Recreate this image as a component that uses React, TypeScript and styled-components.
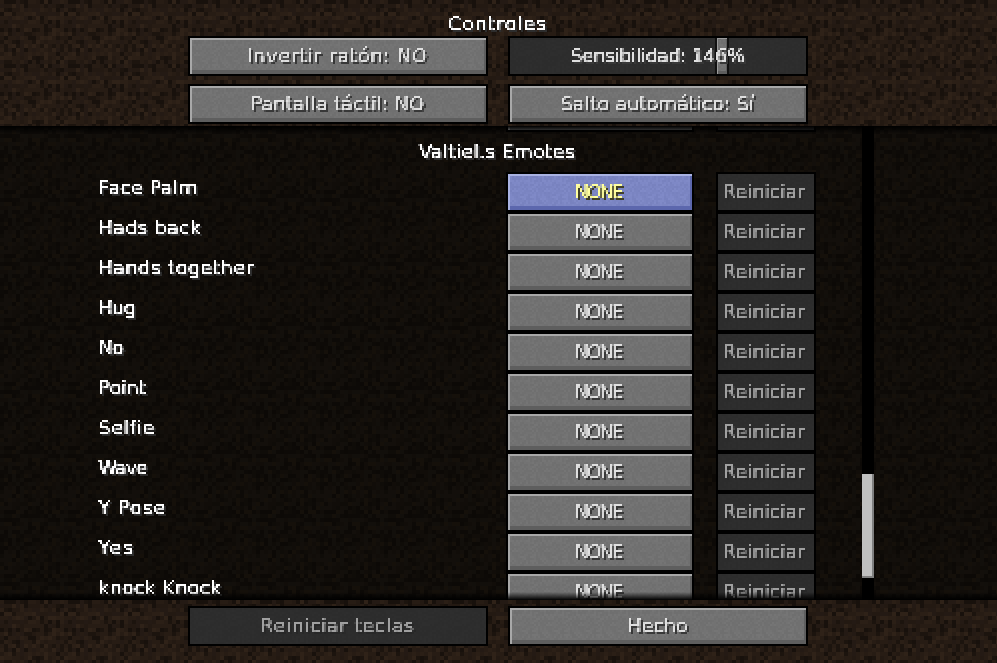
import React from "react";
import styled, { createGlobalStyle } from "styled-components";

function tile(size: number, cell: number, palette: string[], seed: number): string {
  let s = seed;
  const next = () => {
    s = (s * 16807) % 2147483647;
    return s / 2147483647;
  };
  let rects = "";
  for (let y = 0; y < size; y += cell) {
    for (let x = 0; x < size; x += cell) {
      const c = palette[Math.floor(next() * palette.length)];
      rects += `<rect x="${x}" y="${y}" width="${cell}" height="${cell}" fill="${c}"/>`;
    }
  }
  const svg = `<svg xmlns="http://www.w3.org/2000/svg" width="${size}" height="${size}" shape-rendering="crispEdges">${rects}</svg>`;
  return `url("data:image/svg+xml,${encodeURIComponent(svg)}")`;
}

const dirtBright = tile(64, 4, ["#271c14", "#271c14", "#231912", "#2b1f16", "#1c140e", "#18110c", "#241a14", "#2f2218"], 4711);
const dirtDark = tile(64, 4, ["#110d09", "#0f0c08", "#0d0a07", "#130f0b", "#0c0906", "#120f0b", "#15100a"], 4711);
const stone = tile(32, 2, ["#727272", "#737373", "#707070", "#757575", "#6f6f6f"], 91);
const blueStone = tile(32, 2, ["#7c86c3", "#7e88c6", "#7a84c1", "#808ac7", "#7882bf"], 91);
const darkStone = tile(32, 2, ["#2d2d2d", "#2c2c2c", "#2e2e2e", "#2c2c2c"], 17);

const Global = createGlobalStyle`
  html, body { margin: 0; padding: 0; background: #000; overflow: hidden; }
  #root { width: 997px; height: 663px; }
`;

const Screen = styled.div`
  width: 997px;
  height: 663px;
  display: flex;
  flex-direction: column;
  font-family: "DejaVu Sans", sans-serif;
  font-size: 19px;
  line-height: 22px;
`;

const Header = styled.header`
  height: 126px;
  flex: none;
  box-sizing: border-box;
  padding: 13px 1px 0 0;
  display: flex;
  flex-direction: column;
  align-items: center;
  background-image: ${dirtBright};
`;

const Title = styled.div`
  height: 23px;
  color: #fff;
  letter-spacing: 1px;
  text-shadow: 2px 2px 0 #2e2e2e;
  padding: 0 4px;
  filter: url(#pixel);
`;

const ButtonGrid = styled.div`
  display: grid;
  grid-template-columns: 300px 300px;
  column-gap: 20px;
  row-gap: 8px;
`;

type Tone = "normal" | "hover" | "disabled";

const Btn = styled.div<{ $tone?: Tone; $w?: number; $shift?: number }>`
  position: relative;
  box-sizing: border-box;
  height: 40px;
  width: ${(p) => (p.$w ? `${p.$w}px` : "auto")};
  flex: none;
  border: 2px solid #000;
  padding-right: ${(p) => p.$shift ?? 0}px;
  display: flex;
  align-items: center;
  justify-content: center;
  background-image: ${(p) =>
    p.$tone === "hover" ? blueStone : p.$tone === "disabled" ? darkStone : stone};
  box-shadow: ${(p) =>
    p.$tone === "hover"
      ? "inset 2px 2px 0 #a9b2e2, inset -2px -4px 0 #5c67ad"
      : p.$tone === "disabled"
        ? "none"
        : "inset 2px 2px 0 #a8a8a8, inset -2px -4px 0 #5e5e5e"};
`;

const BtnText = styled.span<{ $tone?: Tone; $ls?: number }>`
  position: relative;
  padding: 0 4px;
  filter: url(#pixel);
  white-space: nowrap;
  letter-spacing: ${(p) => p.$ls ?? 0}px;
  color: ${(p) =>
    p.$tone === "hover" ? "#ffffa0" : p.$tone === "disabled" ? "#a0a0a0" : "#e0e0e0"};
  text-shadow: 2px 2px 0
    ${(p) => (p.$tone === "hover" ? "#3f3f28" : p.$tone === "disabled" ? "#282828" : "#383838")};
`;

const Slider = styled(Btn)`
  background-image: ${darkStone};
  box-shadow: none;
`;

const SliderHandle = styled.div`
  position: absolute;
  left: 205px;
  top: 0;
  bottom: 0;
  width: 10px;
  border-left: 2px solid #111;
  border-right: 2px solid #111;
  background-image: ${stone};
  box-shadow: inset 1px 1px 0 #9a9a9a, inset -1px -3px 0 #5e5e5e;
`;

const List = styled.main`
  position: relative;
  flex: 1;
  min-height: 0;
  overflow: hidden;
  background-image: ${dirtDark};
`;

const ListContent = styled.div`
  margin-top: -34px;
`;

const SectionTitle = styled.div`
  height: 40px;
  display: flex;
  align-items: center;
  justify-content: center;
  color: #fff;
  padding: 0 2px 0 0;
  box-sizing: border-box;
  letter-spacing: 0.3px;
  text-shadow: 2px 2px 0 #2e2e2e;
  span {
    padding: 0 4px;
    filter: url(#pixel);
  }
`;

const Row = styled.div`
  height: 40px;
  display: flex;
  padding-left: 95px;
`;

const RowLabel = styled.div<{ $ls?: number }>`
  width: 411px;
  flex: none;
  padding-top: 5px;
  box-sizing: border-box;
  color: #fff;
  letter-spacing: ${(p) => p.$ls ?? 0}px;
  text-shadow: 2px 2px 0 #2e2e2e;
  white-space: nowrap;
  span {
    display: inline-block;
    padding: 0 4px;
    filter: url(#pixel);
  }
`;

const RowGap = styled.div`
  width: 22px;
  flex: none;
`;

const Scrollbar = styled.div`
  position: absolute;
  left: 862px;
  top: 0;
  bottom: 0;
  width: 12px;
  background: #000;
`;

const Thumb = styled.div`
  position: absolute;
  top: 348px;
  left: 0;
  width: 12px;
  height: 104px;
  background: #c0c0c0;
  box-shadow: inset -2px -2px 0 #808080;
`;

const Fade = styled.div<{ $side: "top" | "bottom" }>`
  position: absolute;
  left: 0;
  right: 0;
  height: 8px;
  ${(p) => p.$side}: 0;
  background: linear-gradient(${(p) => (p.$side === "top" ? "to bottom" : "to top")}, #000, rgba(0, 0, 0, 0));
`;

const Footer = styled.footer`
  height: 63px;
  flex: none;
  box-sizing: border-box;
  padding: 6px 1px 0 0;
  display: flex;
  justify-content: center;
  background-image: ${dirtBright};
`;

const HiddenDefs = styled.svg`
  position: absolute;
  width: 0;
  height: 0;
`;

const rows: { label: string; ls: number }[] = [
  { label: "Face Palm", ls: 0.45 },
  { label: "Hads back", ls: 0.45 },
  { label: "Hands together", ls: 0.55 },
  { label: "Hug", ls: -0.6 },
  { label: "No", ls: -0.5 },
  { label: "Point", ls: 0.2 },
  { label: "Selfie", ls: 0.65 },
  { label: "Wave", ls: -1 },
  { label: "Y Pose", ls: 1 },
  { label: "Yes", ls: 2 },
  { label: "knock Knock", ls: 0.3 },
];

function KeyRow({ label, active, ls }: { label: string; active?: boolean; ls?: number }) {
  const tone: Tone = active ? "hover" : "normal";
  return (
    <Row>
      <RowLabel $ls={ls}>
        <span>{label}</span>
      </RowLabel>
      <Btn $tone={tone} $w={188} $shift={3}>
        <BtnText $tone={tone} $ls={-2.2}>NONE</BtnText>
      </Btn>
      <RowGap />
      <Btn $tone="disabled" $w={100} $shift={3}>
        <BtnText $tone="disabled">Reiniciar</BtnText>
      </Btn>
    </Row>
  );
}

export default function App() {
  return (
    <Screen>
      <Global />
      <HiddenDefs aria-hidden="true">
        <filter id="pixel" x="0" y="0" width="100%" height="100%" colorInterpolationFilters="sRGB">
          <feFlood x="0" y="0" width="1" height="1" floodColor="#000" />
          <feComposite x="0" y="0" width="2" height="2" />
          <feTile result="grid" />
          <feComposite in="SourceGraphic" in2="grid" operator="in" />
          <feConvolveMatrix order="2" kernelMatrix="1 1 1 1" divisor="1" targetX="0" targetY="0" preserveAlpha="false" edgeMode="none" />
          <feComponentTransfer>
            <feFuncA type="linear" slope="4" intercept="-0.4" />
          </feComponentTransfer>
        </filter>
      </HiddenDefs>
      <Header>
        <Title>Controles</Title>
        <ButtonGrid>
          <Btn>
            <BtnText $ls={0.75}>Invertir ratón: NO</BtnText>
          </Btn>
          <Slider>
            <SliderHandle />
            <BtnText $ls={-0.4}>Sensibilidad: 146%</BtnText>
          </Slider>
          <Btn>
            <BtnText $ls={0.15}>Pantalla táctil: NO</BtnText>
          </Btn>
          <Btn>
            <BtnText $ls={0.1}>Salto automático: Sí</BtnText>
          </Btn>
        </ButtonGrid>
      </Header>
      <List>
        <ListContent>
          <Row>
            <RowLabel />
            <Btn $w={188} />
            <RowGap />
            <Btn $tone="disabled" $w={100} />
          </Row>
          <SectionTitle>
            <span>Valtiel.s Emotes</span>
          </SectionTitle>
          {rows.map((r, i) => (
            <KeyRow key={r.label} label={r.label} ls={r.ls} active={i === 0} />
          ))}
        </ListContent>
        <Fade $side="top" />
        <Fade $side="bottom" />
        <Scrollbar>
          <Thumb />
        </Scrollbar>
      </List>
      <Footer>
        <ButtonGrid>
          <Btn $tone="disabled">
            <BtnText $tone="disabled" $ls={0.6}>Reiniciar teclas</BtnText>
          </Btn>
          <Btn>
            <BtnText>Hecho</BtnText>
          </Btn>
        </ButtonGrid>
      </Footer>
    </Screen>
  );
}
